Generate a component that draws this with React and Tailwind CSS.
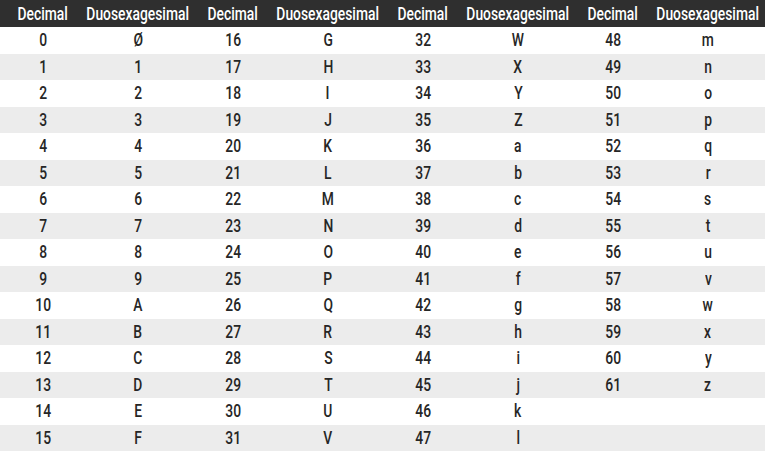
import React from "react";

const digits = "0123456789ABCDEFGHIJKLMNOPQRSTUVWXYZabcdefghijklmnopqrstuvwxyz";

function symbolFor(n) {
  if (n === 0) return "Ø";
  return digits[n];
}

// condensed look: Roboto squeezed horizontally, kept centred even when wider than the cell
function Narrow({ children }) {
  return (
    <div className="flex justify-center">
      <span className="inline-block shrink-0 scale-x-[0.77] whitespace-nowrap">{children}</span>
    </div>
  );
}

export default function App() {
  const rows = Array.from({ length: 16 }, (_, i) => i);
  const cols = [0, 16, 32, 48];

  return (
    <div className="w-[770px] h-[453px] bg-white overflow-hidden font-['Roboto',sans-serif]">
      <table className="w-[765px] table-fixed border-collapse text-[18px] leading-none">
        <colgroup>
          <col className="w-[86px]" />
          <col className="w-[104px]" />
          <col className="w-[86px]" />
          <col className="w-[104px]" />
          <col className="w-[86px]" />
          <col className="w-[104px]" />
          <col className="w-[86px]" />
          <col className="w-[109px]" />
        </colgroup>
        <thead>
          <tr className="h-[27px] bg-[#2f2f2f] text-white">
            {cols.map((c) => (
              <React.Fragment key={c}>
                <th className="p-0 font-medium">
                  <Narrow>Decimal</Narrow>
                </th>
                <th className={c === 48 ? "p-0 pr-[5px] font-medium" : "p-0 font-medium"}>
                  <Narrow>Duosexagesimal</Narrow>
                </th>
              </React.Fragment>
            ))}
          </tr>
        </thead>
        <tbody>
          {rows.map((r) => (
            <tr key={r} className={r % 2 === 0 ? "h-[26.5px] bg-white text-[#262626]" : "h-[26.5px] bg-[#ececec] text-[#262626]"}>
              {cols.map((c) => {
                const n = c + r;
                const show = n < 62;
                return (
                  <React.Fragment key={c}>
                    <td className="p-0 font-medium">{show ? <Narrow>{n}</Narrow> : ""}</td>
                    <td className={c === 48 ? "p-0 pr-[5px] font-medium" : "p-0 font-medium"}>
                      {show ? <Narrow>{symbolFor(n)}</Narrow> : ""}
                    </td>
                  </React.Fragment>
                );
              })}
            </tr>
          ))}
        </tbody>
      </table>
    </div>
  );
}
